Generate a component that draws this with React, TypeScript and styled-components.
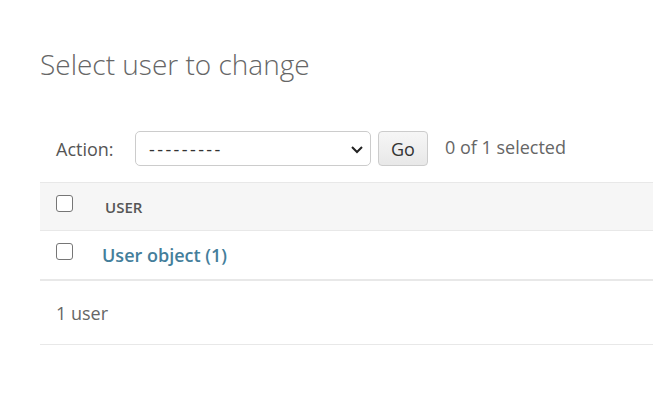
import styled, { createGlobalStyle } from "styled-components";

const GlobalStyle = createGlobalStyle`
  html, body {
    margin: 0;
    padding: 0;
    background: #fff;
  }
  body {
    font-family: "Open Sans", "Noto Sans", "Liberation Sans", sans-serif;
    color: #333;
  }
`;

const Page = styled.div`
  padding: 44px 0 0 40px;
  width: 613px;
`;

const Title = styled.h1`
  margin: 0 0 47px;
  font-size: 28px;
  font-weight: 300;
  color: #666;
  line-height: 40px;
`;

const Actions = styled.div`
  display: flex;
  align-items: center;
  padding: 0 0 16px 16px;
  height: 35px;
`;

const Label = styled.label`
  font-size: 18px;
  color: #555;
  width: 79px;
`;

const SelectBox = styled.div`
  width: 236px;
  height: 35px;
  box-sizing: border-box;
  border: 1px solid #ccc;
  border-radius: 5px;
  display: flex;
  align-items: center;
  justify-content: space-between;
  padding: 0 6px 0 13px;
  font-size: 18px;
  color: #333;
  letter-spacing: 2.4px;
`;

const GoButton = styled.button`
  margin-left: 7px;
  width: 50px;
  height: 35px;
  border: 1px solid #ccc;
  border-radius: 4px;
  background: linear-gradient(#f6f6f6, #e8e8e8);
  font-family: inherit;
  font-size: 18px;
  color: #333;
  padding: 0;
`;

const Counter = styled.span`
  margin-left: 17px;
  font-size: 18px;
  color: #666;
  margin-top: -4px;
`;

const Table = styled.div`
  border-top: 1px solid #e8e8e8;
`;

const HeadRow = styled.div`
  display: flex;
  align-items: center;
  height: 47px;
  background: #f6f6f6;
  border-bottom: 1px solid #e8e8e8;
  padding-left: 16px;
`;

const Row = styled.div`
  display: flex;
  align-items: center;
  height: 48px;
  border-bottom: 2px solid #e8e8e8;
  padding-left: 16px;
`;

const Check = styled.span`
  display: inline-block;
  width: 17px;
  height: 17px;
  box-sizing: border-box;
  border: 1.5px solid #767676;
  border-radius: 3px;
  background: #fff;
  margin-top: -7px;
`;

const HeadCell = styled.span<{ $indent: number }>`
  margin-left: ${(p) => p.$indent}px;
  font-size: 15px;
  font-weight: 600;
  color: #555;
  text-transform: uppercase;
`;

const Link = styled.a`
  margin-left: 29px;
  font-size: 18px;
  font-weight: 600;
  color: #447e9b;
  text-decoration: none;
`;

const Footer = styled.div`
  height: 63px;
  display: flex;
  align-items: center;
  padding-left: 16px;
  font-size: 18px;
  color: #666;
  border-bottom: 1px solid #e8e8e8;
`;

export default function App() {
  return (
    <>
      <GlobalStyle />
      <Page>
        <Title>Select user to change</Title>
        <Actions>
          <Label>Action:</Label>
          <SelectBox>
            <span>---------</span>
            <svg width="14" height="14" viewBox="0 0 14 14">
              <path d="M2 5l5 5 5-5" fill="none" stroke="#222" strokeWidth="2" />
            </svg>
          </SelectBox>
          <GoButton>Go</GoButton>
          <Counter>0 of 1 selected</Counter>
        </Actions>
        <Table>
          <HeadRow>
            <Check />
            <HeadCell $indent={32}>User</HeadCell>
          </HeadRow>
          <Row>
            <Check />
            <Link href="#">User object (1)</Link>
          </Row>
          <Footer>1 user</Footer>
        </Table>
      </Page>
    </>
  );
}
